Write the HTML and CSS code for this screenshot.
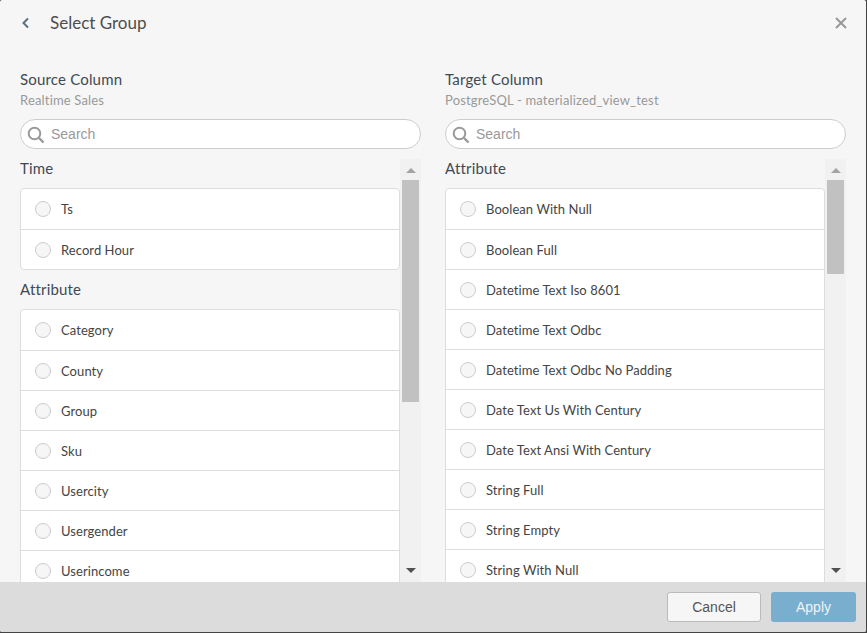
FILE: index.html
```html
<!DOCTYPE html>
<html lang="en">
<head>
    <meta charset="UTF-8">
    <title>Select Group</title>
    <link rel="stylesheet" href="styles.css">
</head>
<body>
    <div class="modal">
        <div class="header">
            <svg class="back" width="9" height="12" viewBox="0 0 9 12"><path d="M7 1.5 2.5 6 7 10.5" fill="none" stroke="#5a6f80" stroke-width="2"/></svg>
            <h1 class="title">Select Group</h1>
            <svg class="close" width="12" height="12" viewBox="0 0 12 12"><path d="M1 1 11 11M11 1 1 11" fill="none" stroke="#999" stroke-width="2"/></svg>
        </div>

        <div class="columns">
            <div class="column">
                <div class="col-title">Source Column</div>
                <div class="col-sub">Realtime Sales</div>
                <div class="search">
                    <svg width="19" height="19" viewBox="0 0 19 19"><circle cx="7.5" cy="8.5" r="5.8" fill="none" stroke="#999" stroke-width="2"/><path d="M12 13 16.5 17.5" stroke="#999" stroke-width="2.4"/></svg>
                    <span class="placeholder">Search</span>
                </div>
                <div class="scroller">
                    <div class="groups">
                        <div class="group-name">Time</div>
                        <div class="list">
                            <div class="row"><span class="radio"></span>Ts</div>
                            <div class="row"><span class="radio"></span>Record Hour</div>
                        </div>
                        <div class="group-name">Attribute</div>
                        <div class="list">
                            <div class="row"><span class="radio"></span>Category</div>
                            <div class="row"><span class="radio"></span>County</div>
                            <div class="row"><span class="radio"></span>Group</div>
                            <div class="row"><span class="radio"></span>Sku</div>
                            <div class="row"><span class="radio"></span>Usercity</div>
                            <div class="row"><span class="radio"></span>Usergender</div>
                            <div class="row"><span class="radio"></span>Userincome</div>
                        </div>
                    </div>
                    <div class="scrollbar">
                        <span class="arrow-up"></span>
                        <div class="track"><div class="thumb thumb-source"></div></div>
                        <span class="arrow-down"></span>
                    </div>
                </div>
            </div>

            <div class="column">
                <div class="col-title">Target Column</div>
                <div class="col-sub">PostgreSQL - materialized_view_test</div>
                <div class="search">
                    <svg width="19" height="19" viewBox="0 0 19 19"><circle cx="7.5" cy="8.5" r="5.8" fill="none" stroke="#999" stroke-width="2"/><path d="M12 13 16.5 17.5" stroke="#999" stroke-width="2.4"/></svg>
                    <span class="placeholder">Search</span>
                </div>
                <div class="scroller">
                    <div class="groups">
                        <div class="group-name">Attribute</div>
                        <div class="list">
                            <div class="row"><span class="radio"></span>Boolean With Null</div>
                            <div class="row"><span class="radio"></span>Boolean Full</div>
                            <div class="row"><span class="radio"></span>Datetime Text Iso 8601</div>
                            <div class="row"><span class="radio"></span>Datetime Text Odbc</div>
                            <div class="row"><span class="radio"></span>Datetime Text Odbc No Padding</div>
                            <div class="row"><span class="radio"></span>Date Text Us With Century</div>
                            <div class="row"><span class="radio"></span>Date Text Ansi With Century</div>
                            <div class="row"><span class="radio"></span>String Full</div>
                            <div class="row"><span class="radio"></span>String Empty</div>
                            <div class="row"><span class="radio"></span>String With Null</div>
                        </div>
                    </div>
                    <div class="scrollbar">
                        <span class="arrow-up"></span>
                        <div class="track"><div class="thumb thumb-target"></div></div>
                        <span class="arrow-down"></span>
                    </div>
                </div>
            </div>
        </div>

        <div class="footer">
            <button class="btn btn-cancel">Cancel</button>
            <button class="btn btn-apply">Apply</button>
        </div>
    </div>
</body>
</html>
```

FILE: styles.css
```css
* {
    box-sizing: border-box;
}

html, body {
    height: 100%;
}

body {
    margin: 0;
    overflow: hidden;
    font-family: Lato, sans-serif;
    color: #444;
    background-color: #444;
}

.modal {
    display: flex;
    flex-direction: column;
    width: 866px;
    height: 632px;
    overflow: hidden;
    background-color: #f6f6f6;
    border-radius: 2px;
}

.header {
    display: flex;
    align-items: center;
    height: 46px;
    padding: 0 21px;
}

.back {
    margin-right: 20px;
}

.title {
    flex: 1;
    margin: 0 0 1px;
    font-size: 17px;
    font-weight: 400;
    line-height: 22px;
    color: #4d4d4d;
}

.close {
    margin-right: -2px;
}

.columns {
    display: flex;
    flex: 1;
    gap: 24px;
    min-height: 0;
    padding: 24px 20px 0;
}

.column {
    display: flex;
    flex-direction: column;
    width: 401px;
    min-height: 0;
}

.col-title {
    height: 20px;
    font-size: 15px;
    line-height: 19px;
    letter-spacing: 0.18px;
    color: #3f4a55;
}

.col-sub {
    height: 20px;
    margin-top: 1px;
    font-size: 13px;
    line-height: 19px;
    letter-spacing: 0.17px;
    color: #999;
}

.search {
    display: flex;
    align-items: center;
    gap: 5px;
    height: 30px;
    margin-top: 8px;
    padding-left: 6px;
    background-color: #fff;
    border: 1px solid #ccc;
    border-radius: 15px;
}

.placeholder {
    font-family: "Liberation Sans", sans-serif;
    font-size: 14px;
    color: #999;
}

.scroller {
    display: flex;
    flex: 1;
    min-height: 0;
    margin-top: 10px;
    overflow: hidden;
}

.groups {
    flex: 1;
}

.group-name {
    height: 29px;
    font-size: 15px;
    line-height: 19px;
    letter-spacing: 0.18px;
    color: #3f4a55;
}

.list {
    margin-bottom: 10px;
    background-color: #fff;
    border: 1px solid #ddd;
    border-radius: 4px;
}

.row {
    display: flex;
    align-items: center;
    height: 40px;
    padding-left: 14px;
    font-size: 13px;
    letter-spacing: 0.07px;
    color: #444;
    border-top: 1px solid #ddd;
}

.row:first-child {
    border-top: none;
}

.radio {
    width: 16px;
    height: 16px;
    margin-right: 10px;
    background-color: #f6f6f6;
    border: 1px solid #ccc;
    border-radius: 50%;
}

.scrollbar {
    display: flex;
    flex-direction: column;
    align-items: center;
    flex: none;
    width: 21px;
    padding: 0 2px;
    background-color: #f1f1f1;
}

.track {
    flex: 1;
    width: 17px;
}

.thumb {
    width: 100%;
    background-color: #c1c1c1;
}

.thumb-source {
    height: 222px;
}

.thumb-target {
    height: 94px;
}

.arrow-up, .arrow-down {
    display: block;
    flex: none;
    width: 0;
    height: 0;
    border-left: 5px solid transparent;
    border-right: 5px solid transparent;
}

.arrow-up {
    margin: 9px 0 7px;
    border-bottom: 5px solid #a3a3a3;
}

.arrow-down {
    margin: 6px 0 9px;
    border-top: 5px solid #505050;
}

.footer {
    display: flex;
    flex: none;
    justify-content: flex-end;
    gap: 10px;
    height: 50px;
    padding: 10px 10px 0 0;
    background-color: #dcdcdc;
}

.btn {
    height: 30px;
    font-family: "Liberation Sans", sans-serif;
    font-size: 14px;
    border-radius: 3px;
}

.btn-cancel {
    width: 94px;
    color: #555;
    background-color: #f6f6f6;
    border: 1px solid #bbb;
}

.btn-apply {
    width: 85px;
    color: #eef4f8;
    background-color: #79aecf;
    border: none;
}
```
